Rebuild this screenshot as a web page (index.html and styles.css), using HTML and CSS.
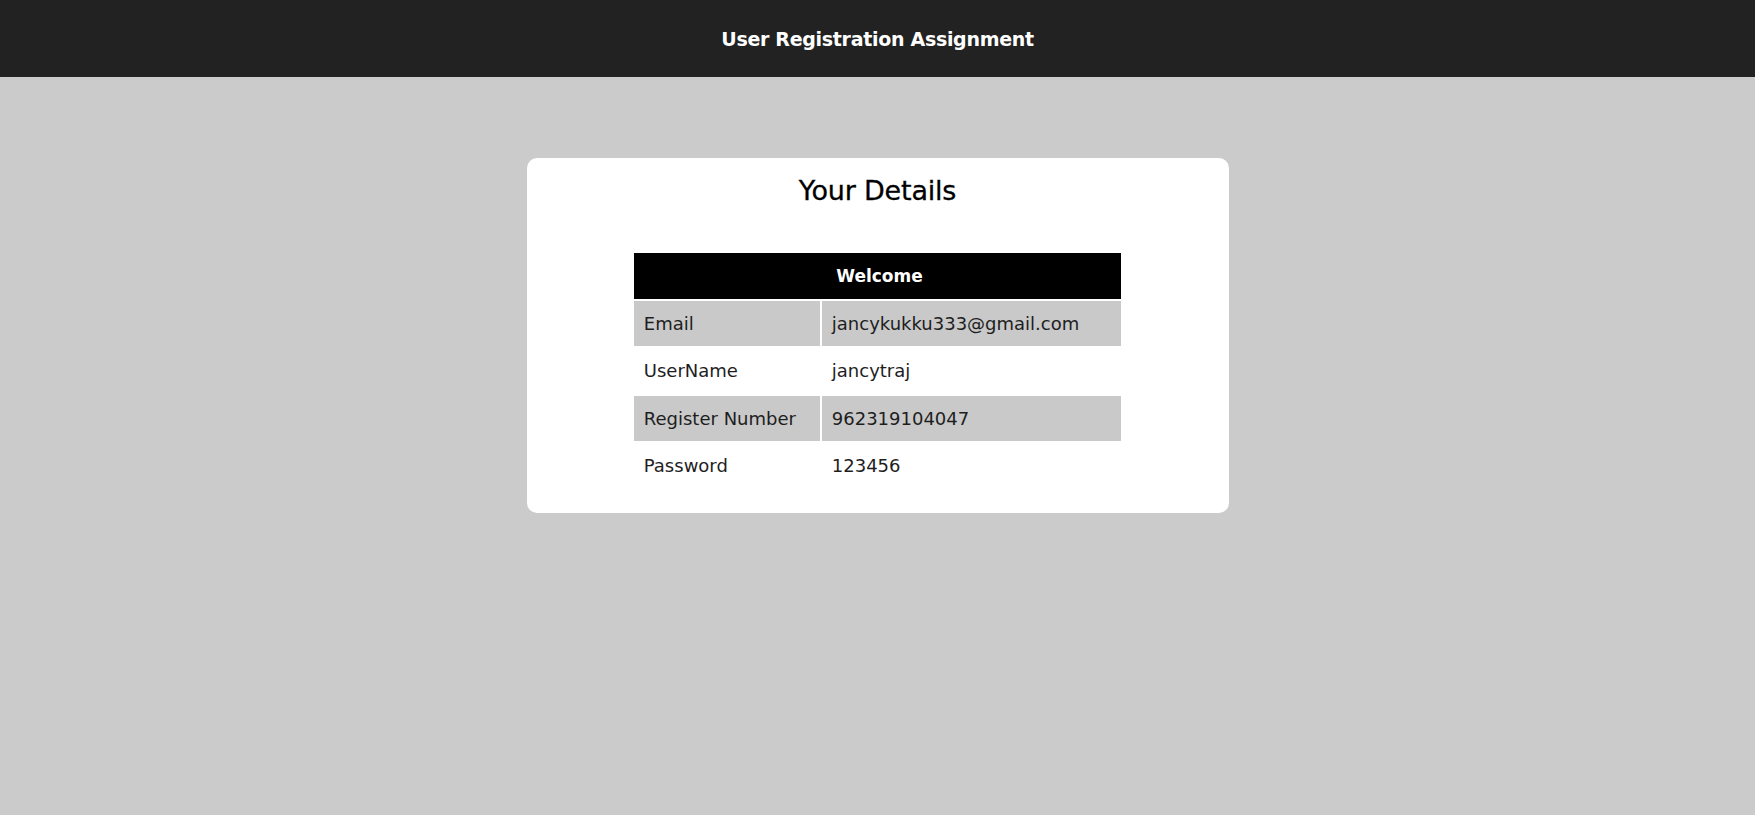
FILE: index.html
```html
<!DOCTYPE html>
<html lang="en">
<head>
<meta charset="utf-8">
<title>User Registration Assignment</title>
<link rel="stylesheet" href="styles.css">
</head>
<body>
<header class="topbar">
  <h1 class="topbar-title">User Registration Assignment</h1>
</header>
<main class="page">
  <section class="card">
    <h2 class="card-title">Your Details</h2>
    <table class="details">
      <colgroup>
        <col class="col-label">
        <col class="col-value">
      </colgroup>
      <thead>
        <tr><th colspan="2">Welcome</th></tr>
      </thead>
      <tbody>
        <tr class="shaded"><td>Email</td><td>jancykukku333@gmail.com</td></tr>
        <tr><td>UserName</td><td>jancytraj</td></tr>
        <tr class="shaded"><td>Register Number</td><td>962319104047</td></tr>
        <tr><td>Password</td><td>123456</td></tr>
      </tbody>
    </table>
  </section>
</main>
</body>
</html>
```

FILE: styles.css
```css
* { box-sizing: border-box; }

html, body {
  margin: 0;
  padding: 0;
}

body {
  background: #cbcbcb;
  font-family: "DejaVu Sans", "Noto Sans", sans-serif;
  color: #1c1c1c;
  min-height: 815px;
}

.topbar {
  background: #222222;
  height: 77px;
  padding-top: 2px;
  text-align: center;
}

.topbar-title {
  margin: 0;
  color: #ffffff;
  font-size: 19px;
  font-weight: bold;
  letter-spacing: -0.3px;
  line-height: 75px;
}

.page {
  display: flex;
  justify-content: center;
  padding-top: 81px;
}

.card {
  width: 40%;
  background: #ffffff;
  border-radius: 10px;
  padding: 17px 0 22px;
}

.card-title {
  margin: 0 0 44px;
  text-align: center;
  font-size: 27px;
  font-weight: normal;
  line-height: 32px;
  color: #000000;
  letter-spacing: -0.2px;
  -webkit-text-stroke: 0.3px #000000;
}

.details {
  width: 70%;
  margin: 0 auto;
  border-collapse: separate;
  border-spacing: 2px;
  table-layout: fixed;
  font-size: 18px;
}

.col-label { width: 186px; }

.details th {
  background: #000000;
  color: #ffffff;
  font-size: 17px;
  font-weight: bold;
  height: 45.5px;
  padding: 0 10px 0 14px;
  text-align: center;
}

.details td {
  height: 45.5px;
  padding: 0 10px;
  text-align: left;
  color: #1e1e1e;
  white-space: nowrap;
}

.details tr.shaded td {
  background: #c9c9c9;
}
```
